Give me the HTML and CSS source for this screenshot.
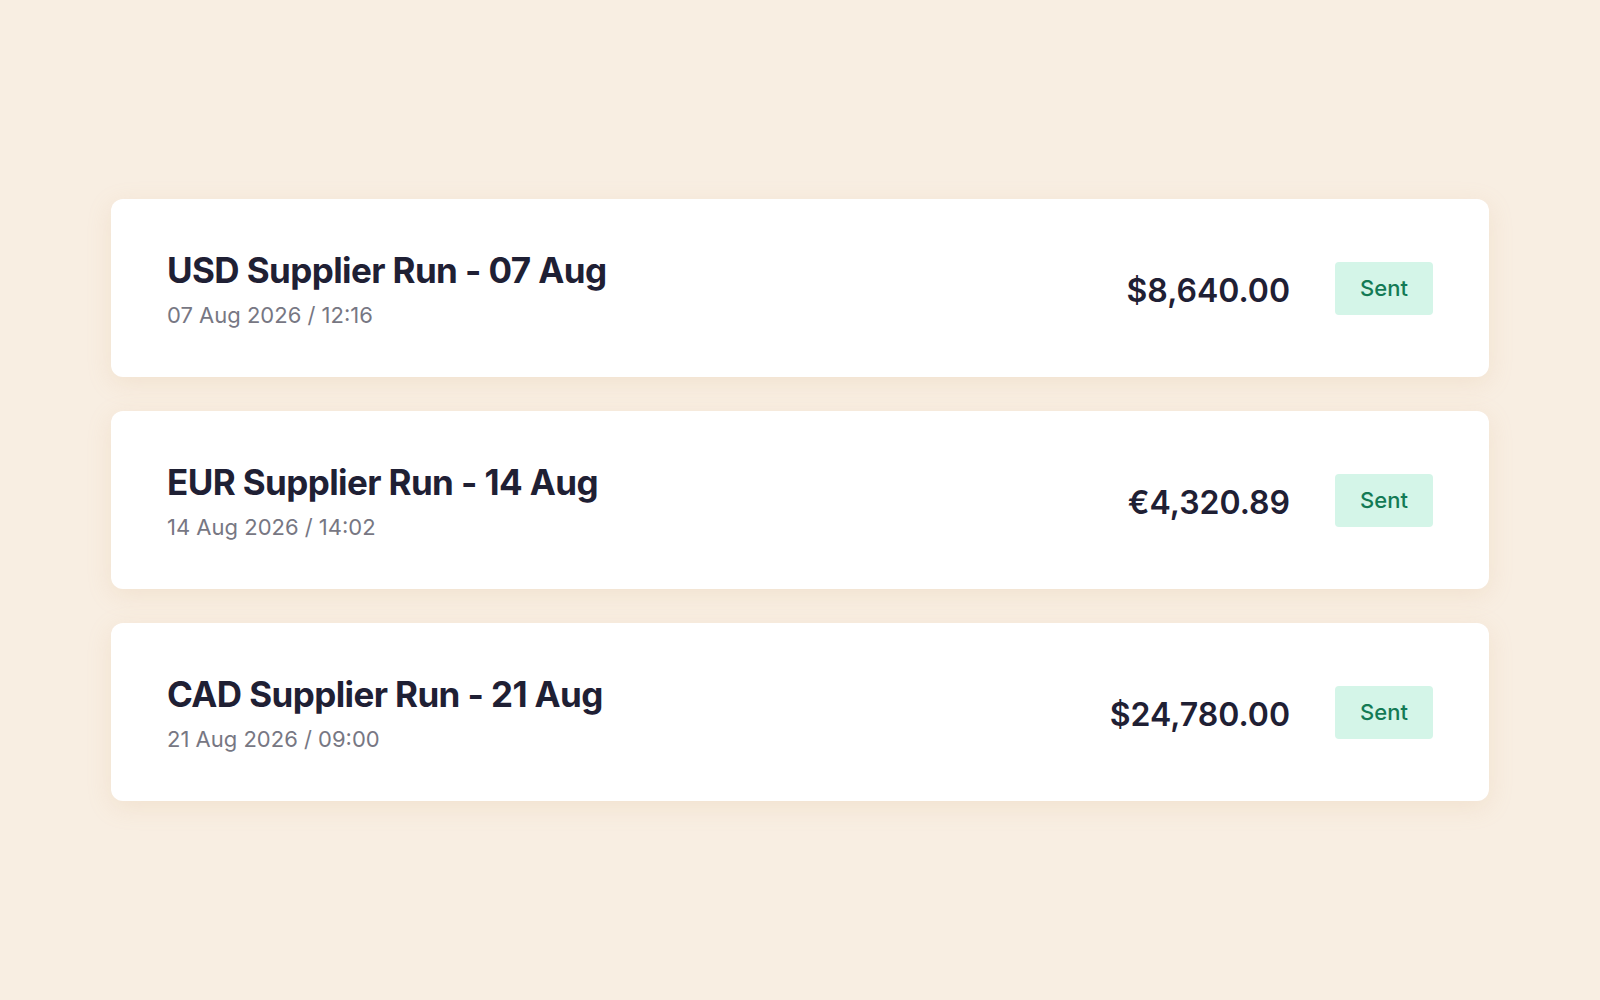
FILE: index.html
```html
<!DOCTYPE html>
<html lang="en">
<head>
    <meta charset="UTF-8">
    <meta name="viewport" content="width=device-width, initial-scale=1.0">
    <title>Supplier Runs</title>
    <link rel="stylesheet" href="styles.css">
</head>
<body>
    <div class="list">
        <div class="run">
            <div class="run-info">
                <div class="run-title">USD Supplier Run - 07 Aug</div>
                <div class="run-date">07 Aug 2026 / 12:16</div>
            </div>
            <div class="run-amount">$8,640.00</div>
            <div class="status">Sent</div>
        </div>
        <div class="run">
            <div class="run-info">
                <div class="run-title">EUR Supplier Run - 14 Aug</div>
                <div class="run-date">14 Aug 2026 / 14:02</div>
            </div>
            <div class="run-amount">€4,320.89</div>
            <div class="status">Sent</div>
        </div>
        <div class="run">
            <div class="run-info">
                <div class="run-title">CAD Supplier Run - 21 Aug</div>
                <div class="run-date">21 Aug 2026 / 09:00</div>
            </div>
            <div class="run-amount">$24,780.00</div>
            <div class="status">Sent</div>
        </div>
    </div>
</body>
</html>
```

FILE: styles.css
```css
body {
    display: flex;
    justify-content: center;
    align-items: center;
    height: 100vh;
    margin: 0;
    padding: 0 111px;
    box-sizing: border-box;
    font-family: 'Inter', sans-serif;
    background-color: #f8eee2;
}

.list {
    display: flex;
    flex-direction: column;
    gap: 34px;
    width: 100%;
}

.run {
    display: flex;
    align-items: center;
    height: 178px;
    box-sizing: border-box;
    padding: 0 56px;
    background-color: #fff;
    border-radius: 12px;
    box-shadow: 0px 6px 24px rgba(214, 170, 120, 0.18);
}

.run-info {
    flex: 1;
    display: flex;
    flex-direction: column;
}

.run-title {
    font-size: 35px;
    font-weight: 700;
    letter-spacing: -0.6px;
    color: #1f2034;
    line-height: 44px;
}

.run-date {
    font-size: 22px;
    color: #777783;
    line-height: 28px;
    margin-top: 9px;
}

.run-amount {
    font-size: 32px;
    font-weight: 600;
    color: #1f2034;
    margin-top: 4px;
}

.status {
    margin-left: 45px;
    width: 98px;
    height: 53px;
    display: flex;
    justify-content: center;
    align-items: center;
    background-color: #d4f5e8;
    color: #137a55;
    font-size: 22px;
    font-weight: 500;
    border-radius: 4px;
}
```
